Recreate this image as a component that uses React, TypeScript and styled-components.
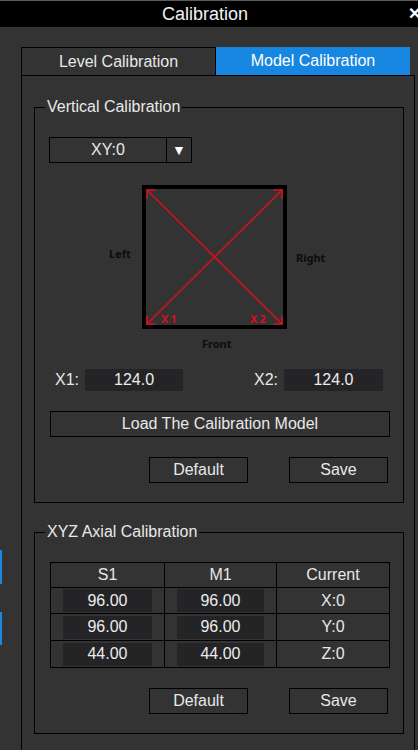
import styled, { createGlobalStyle } from "styled-components";

const GlobalStyle = createGlobalStyle`
  html, body {
    margin: 0;
    padding: 0;
    background: #333333;
  }
  body {
    font-family: "Liberation Sans", Arial, sans-serif;
    color: #e8e8e8;
  }
`;

const Window = styled.div`
  width: 418px;
  height: 750px;
  overflow: hidden;
  background: #333333;
  border-top: 1px solid #5a5a5a;
  box-sizing: border-box;
`;

const TitleBar = styled.div`
  position: relative;
  height: 26px;
  background: #000;
  display: flex;
  align-items: center;
  justify-content: center;
  padding-right: 8px;
  font-size: 18px;
  color: #f2f2f2;
  overflow: hidden;
`;

const Close = styled.span`
  position: absolute;
  right: -3px;
  top: 3px;
  font-size: 16px;
  font-weight: bold;
  color: #fff;
`;

const Body = styled.div`
  display: flex;
  padding-top: 20px;
`;

const Gutter = styled.div`
  width: 2px;
  padding-top: 503px;
  display: flex;
  flex-direction: column;
`;

const Mark = styled.div<{ $h: number; $gap: number }>`
  width: 2px;
  height: ${(p) => p.$h}px;
  margin-top: ${(p) => p.$gap}px;
  background: #1a87e3;
`;

const Main = styled.div`
  margin-left: 19px;
  width: 394px;
`;

const Tabs = styled.div`
  display: flex;
  height: 28px;
`;

const Tab = styled.div<{ $active?: boolean; $w: number }>`
  width: ${(p) => p.$w}px;
  box-sizing: border-box;
  display: flex;
  align-items: center;
  justify-content: center;
  font-size: 16px;
  color: ${(p) => (p.$active ? "#ffffff" : "#e8e8e8")};
  background: ${(p) => (p.$active ? "#1686e0" : "transparent")};
  border: ${(p) => (p.$active ? "none" : "1px solid #000")};
  border-bottom: none;
`;

const Panel = styled.div`
  border: 1px solid #000;
  height: 720px;
  padding: 22px 10px 0 12px;
  box-sizing: border-box;
`;

const Group = styled.fieldset<{ $top?: number }>`
  margin: ${(p) => p.$top ?? 0}px 0 0 0;
  padding: 0;
  border: 1px solid #000;
  min-width: 0;
`;

const Legend = styled.legend`
  margin-left: 10px;
  padding: 0 2px;
  font-size: 16px;
  line-height: 18px;
  color: #e8e8e8;
`;

const GroupBody = styled.div`
  padding: 21px 13px 19px 14px;
  display: flex;
  flex-direction: column;
`;

const Select = styled.div`
  display: flex;
  width: 143px;
  height: 26px;
  box-sizing: border-box;
  border: 1px solid #000;
`;

const SelectValue = styled.div`
  flex: 1;
  display: flex;
  align-items: center;
  justify-content: center;
  font-size: 16px;
  border-right: 1px solid #000;
`;

const SelectArrow = styled.div`
  width: 24px;
  display: flex;
  align-items: center;
  justify-content: center;
  font-size: 14px;
  color: #fff;
`;

const Diagram = styled.svg`
  display: block;
  margin: 18px 0 0 51px;
`;

const OffsetRow = styled.div`
  display: flex;
  justify-content: space-between;
  margin-top: 16px;
  padding: 0 7px 0 6px;
`;

const Field = styled.div`
  display: flex;
  align-items: center;
  gap: 6px;
  font-size: 16px;
`;

const Value = styled.div<{ $w: number; $h: number }>`
  width: ${(p) => p.$w}px;
  height: ${(p) => p.$h}px;
  background: #242426;
  display: flex;
  align-items: center;
  justify-content: center;
  font-size: 16px;
  color: #ececec;
`;

const WideButton = styled.div`
  margin-top: 20px;
  margin-left: 1px;
  height: 26px;
  box-sizing: border-box;
  border: 1px solid #000;
  display: flex;
  align-items: center;
  justify-content: center;
  font-size: 16px;
`;

const Actions = styled.div`
  display: flex;
  justify-content: flex-end;
  gap: 41px;
  margin-top: 20px;
  padding-right: 2px;
`;

const Button = styled.div`
  width: 99px;
  height: 26px;
  box-sizing: border-box;
  border: 1px solid #000;
  display: flex;
  align-items: center;
  justify-content: center;
  font-size: 16px;
`;

const Table = styled.table`
  border-collapse: collapse;
  width: 337px;
  margin-left: 1px;
  table-layout: fixed;
`;

const Th = styled.th<{ $w: number }>`
  width: ${(p) => p.$w}px;
  height: 24px;
  border: 1px solid #000;
  font-weight: normal;
  font-size: 16px;
  line-height: 18px;
  padding: 0;
`;

const Td = styled.td<{ $h: number }>`
  height: ${(p) => p.$h}px;
  border: 1px solid #000;
  padding: 0;
  font-size: 16px;
  line-height: 18px;
  text-align: center;
`;

const CellInput = styled(Value)`
  margin-left: 12px;
`;

const rows = [
  { s1: "96.00", m1: "96.00", cur: "X:0", h: 25 },
  { s1: "96.00", m1: "96.00", cur: "Y:0", h: 26 },
  { s1: "44.00", m1: "44.00", cur: "Z:0", h: 26 },
];

const RED = "#d5101f";

function CalibrationDiagram() {
  return (
    <Diagram width="240" height="172" viewBox="0 0 240 172">
      <rect x="44" y="6" width="141" height="140" fill="none" stroke="#000" strokeWidth="4" />
      <g stroke={RED} strokeWidth="1.6" fill="none" strokeLinecap="round">
        <line x1="47" y1="9" x2="182" y2="143" />
        <line x1="182" y1="9" x2="47" y2="143" />
        <polyline points="55,9 47,9 47,17" />
        <polyline points="174,9 182,9 182,17" />
        <polyline points="47,135 47,143 55,143" />
        <polyline points="182,135 182,143 174,143" />
      </g>
      <g fill={RED} fontFamily="'Noto Sans', sans-serif" fontWeight="bold" fontSize="11">
        <text x="61" y="142" letterSpacing="2">X1</text>
        <text x="150" y="142" letterSpacing="2">X2</text>
      </g>
      <g fill="#0c0c0c" fontFamily="'Noto Sans', sans-serif" fontWeight="bold" fontSize="11">
        <text x="9" y="77">Left</text>
        <text x="196" y="81">Right</text>
        <text x="102" y="167">Front</text>
      </g>
    </Diagram>
  );
}

export default function App() {
  return (
    <>
      <GlobalStyle />
      <Window>
        <TitleBar>
          Calibration
          <Close>✕</Close>
        </TitleBar>
        <Body>
          <Gutter>
            <Mark $h={34} $gap={0} />
            <Mark $h={33} $gap={28} />
          </Gutter>
          <Main>
            <Tabs>
              <Tab $w={195}>Level Calibration</Tab>
              <Tab $w={194} $active>
                Model Calibration
              </Tab>
            </Tabs>
            <Panel>
              <Group>
                <Legend>Vertical Calibration</Legend>
                <GroupBody>
                  <Select>
                    <SelectValue>XY:0</SelectValue>
                    <SelectArrow>▼</SelectArrow>
                  </Select>
                  <CalibrationDiagram />
                  <OffsetRow>
                    <Field>
                      X1:
                      <Value $w={98} $h={22}>124.0</Value>
                    </Field>
                    <Field>
                      X2:
                      <Value $w={99} $h={22}>124.0</Value>
                    </Field>
                  </OffsetRow>
                  <WideButton>Load The Calibration Model</WideButton>
                  <Actions>
                    <Button>Default</Button>
                    <Button>Save</Button>
                  </Actions>
                </GroupBody>
              </Group>
              <Group $top={20}>
                <Legend>XYZ Axial Calibration</Legend>
                <GroupBody>
                  <Table>
                    <thead>
                      <tr>
                        <Th $w={113}>S1</Th>
                        <Th $w={111}>M1</Th>
                        <Th $w={112}>Current</Th>
                      </tr>
                    </thead>
                    <tbody>
                      {rows.map((r, i) => (
                        <tr key={i}>
                          <Td $h={r.h}>
                            <CellInput $w={89} $h={23}>{r.s1}</CellInput>
                          </Td>
                          <Td $h={r.h}>
                            <CellInput $w={87} $h={23}>{r.m1}</CellInput>
                          </Td>
                          <Td $h={r.h}>{r.cur}</Td>
                        </tr>
                      ))}
                    </tbody>
                  </Table>
                  <Actions>
                    <Button>Default</Button>
                    <Button>Save</Button>
                  </Actions>
                </GroupBody>
              </Group>
            </Panel>
          </Main>
        </Body>
      </Window>
    </>
  );
}
